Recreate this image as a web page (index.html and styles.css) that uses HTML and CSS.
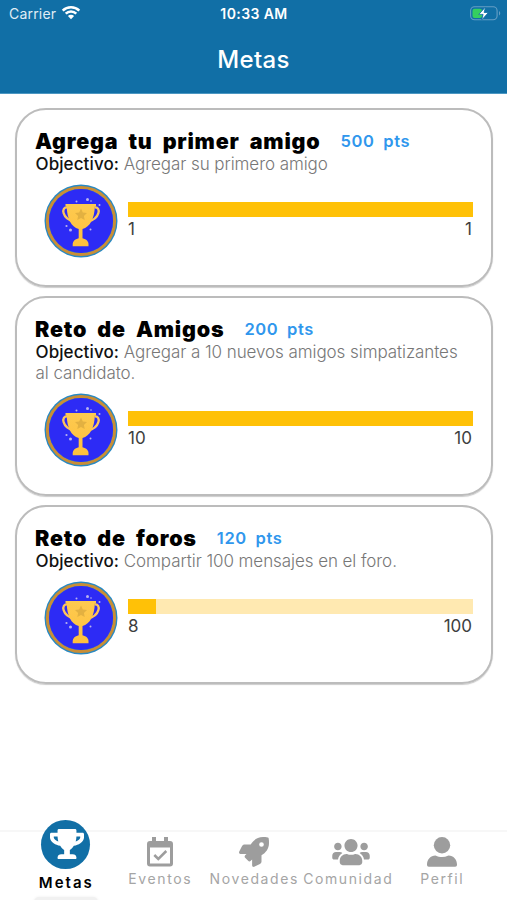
FILE: index.html
```html
<!DOCTYPE html>
<html lang="es">
<head>
<meta charset="utf-8">
<title>Metas</title>
<link rel="stylesheet" href="styles.css">
</head>
<body>
<svg class="defs" aria-hidden="true">
  <defs>
    <linearGradient id="gold" x1="0" y1="0" x2="0" y2="1"><stop offset="0" stop-color="#fdca50"/><stop offset="1" stop-color="#ffc03c"/></linearGradient>
    <symbol id="badge" viewBox="0 0 74 74">
      <circle cx="37" cy="37" r="36.5" fill="#2789c4"/>
      <circle cx="37" cy="37" r="33.6" fill="none" stroke="#c98e36" stroke-width="3"/>
      <circle cx="37" cy="37" r="32" fill="#2d2bf5"/>
      <path d="M23.5 23.5c-7-1-5.5 11.500 6.500 14M50.500 23.500c7-1 5.500 11.500-6.500 14" fill="none" stroke="#fdc55b" stroke-width="2.300"/>
      <path d="M21.500 20h30.500v2.500h-1.200c-.3 12-4.800 20.500-12.300 22.500v9.300c4 .8 6 3.500 6 6v2H28.700v-2c0-2.500 2-5.200 6-6V45c-7.500-2-11.700-10.500-12-22.500h-1.200z" fill="url(#gold)"/>
      <path d="M37 24.500l1.800 4 4.200.5-3.100 2.900.8 4.200-3.700-2-3.700 2 .8-4.200-3.100-2.900 4.200-.5z" fill="#e3b141"/>
      <g fill="#b9b3ee"><circle cx="43.500" cy="15.500" r="1.500"/><circle cx="47" cy="17" r=".8"/><circle cx="32.500" cy="17.500" r="1"/><circle cx="55.500" cy="21" r="1"/><circle cx="22.500" cy="42" r="1.100"/><circle cx="26.500" cy="46" r="1.500"/><circle cx="46.500" cy="45.500" r="1"/></g>
    </symbol>
  </defs>
</svg>
<div class="screen">
  <header class="header">
    <div class="status">
      <div class="carrier">Carrier
        <svg width="20" height="15" viewBox="0 0 20 15"><path d="M1.700 5.700a11.800 11.800 0 0 1 16.600 0M4.700 8.700a7.500 7.500 0 0 1 10.600 0" fill="none" stroke="#fff" stroke-width="2.500"/><path d="M6.900 11a4.400 4.400 0 0 1 6.200 0L10 14.200z" fill="#fff"/></svg>
      </div>
      <div class="time">10:33 AM</div>
      <svg class="battery" width="31" height="15" viewBox="0 0 31 15"><rect x=".6" y=".8" width="26.500" height="13" rx="4" fill="none" stroke="#669fc5" stroke-width="1.100"/><path d="M29 5v4.500c1.700-.8 1.700-3.700 0-4.500z" fill="#669fc5"/><rect x="2.500" y="2.700" width="9.500" height="9.300" rx="2" fill="#35cf60"/><path d="M15.500 1L8.800 8.400h4.300L11.700 14l6.700-7.500h-4.300z" fill="#fff" stroke="#116fa6" stroke-width=".8"/></svg>
    </div>
    <h1>Metas</h1>
  </header>
  <main class="goals">
    <article class="card">
      <div class="heading"><h2>Agrega tu primer amigo</h2><span class="points">500 pts</span></div>
      <p><b>Objectivo:</b> Agregar su primero amigo</p>
      <div class="progress"><svg class="badge"><use href="#badge"/></svg><div class="meter"><div class="track"><div class="fill" style="width:100%"></div></div><div class="counts"><span>1</span><span>1</span></div></div></div>
    </article>
    <article class="card">
      <div class="heading"><h2>Reto de Amigos</h2><span class="points">200 pts</span></div>
      <p><b>Objectivo:</b> Agregar a 10 nuevos amigos simpatizantes al candidato.</p>
      <div class="progress"><svg class="badge"><use href="#badge"/></svg><div class="meter"><div class="track"><div class="fill" style="width:100%"></div></div><div class="counts"><span>10</span><span>10</span></div></div></div>
    </article>
    <article class="card">
      <div class="heading"><h2>Reto de foros</h2><span class="points">120 pts</span></div>
      <p><b>Objectivo:</b> Compartir 100 mensajes en el foro.</p>
      <div class="progress"><svg class="badge"><use href="#badge"/></svg><div class="meter"><div class="track"><div class="fill" style="width:8%"></div></div><div class="counts"><span>8</span><span>100</span></div></div></div>
    </article>
  </main>
  <nav class="tabs">
    <a class="tab active"><span class="bubble"><svg width="34" height="30" viewBox="0 0 576 512" preserveAspectRatio="none"><path d="M552 64H448V24c0-13.300-10.700-24-24-24H152c-13.300 0-24 10.700-24 24v40H24C10.700 64 0 74.700 0 88v56c0 35.700 22.500 72.400 61.900 100.700 31.500 22.700 69.800 37.100 110 41.700C203.300 338.500 240 360 240 360v72h-48c-35.300 0-64 20.700-64 56v12c0 6.600 5.400 12 12 12h296c6.600 0 12-5.400 12-12v-12c0-35.300-28.700-56-64-56h-48v-72s36.700-21.500 68.100-73.600c40.300-4.600 78.600-19 110-41.700 39.300-28.300 61.900-65 61.900-100.700V88c0-13.300-10.700-24-24-24zM99.300 192.800C74.900 175.200 64 155.600 64 144v-16h64.200c1 32.600 5.800 61.200 12.800 86.200-15.100-5.200-29.200-12.400-41.700-21.400zM512 144c0 16.100-17.700 36.100-35.300 48.800-12.500 9-26.700 16.200-41.800 21.400 7-25 11.800-53.600 12.800-86.200H512v16z"/></svg></span><span class="label">Metas</span></a>
    <a class="tab"><svg width="26" height="30" viewBox="0 0 26 30"><path d="M5 0h4v4h8V0h4v4h2a3 3 0 0 1 3 3v19.500a3 3 0 0 1-3 3H3a3 3 0 0 1-3-3V7a3 3 0 0 1 3-3h2zM3 10.500v16h20v-16z" fill-rule="evenodd"/><path d="M7.300 18l4 4 8-8" fill="none" stroke="#9d9d9d" stroke-width="2.500"/></svg><span class="label">Eventos</span></a>
    <a class="tab"><svg width="30" height="30" viewBox="0 0 512 512"><path d="M505 19c-1-5-7-11-12-12C461 0 436 0 410 0 307 0 245 55 199 128H95c-16 0-36 12-43 26L2.500 253A28 28 0 0 0 0 264a24 24 0 0 0 24 24h104l-23 22c-11 12-13 33 0 46l51 51c11 11 32 13 45 0l23-23v104a24 24 0 0 0 24 24c4 0 7-1 11-2.500l98-49.500c15-7 27-26 27-43V313c72-46 128-109 128-211 0-26 0-51-7-83zM384 168a40 40 0 1 1 40-40 40 40 0 0 1-40 40z"/></svg><span class="label">Novedades</span></a>
    <a class="tab"><svg class="people" width="38" height="30" viewBox="0 0 640 512"><path d="M96 224c35.300 0 64-28.700 64-64s-28.700-64-64-64-64 28.700-64 64 28.700 64 64 64zm448 0c35.300 0 64-28.700 64-64s-28.700-64-64-64-64 28.700-64 64 28.700 64 64 64zm32 32h-64c-17.600 0-33.500 7.100-45.100 18.600 40.300 22.100 68.900 62 75.100 109.400h66c17.700 0 32-14.300 32-32v-32c0-35.300-28.700-64-64-64zm-256 0c61.900 0 112-50.100 112-112S381.900 32 320 32 208 82.100 208 144s50.100 112 112 112zm76.800 32h-8.300c-20.800 10-43.900 16-68.500 16s-47.600-6-68.500-16h-8.300C179.600 288 128 339.600 128 403.200V432c0 26.500 21.500 48 48 48h288c26.500 0 48-21.500 48-48v-28.800c0-63.600-51.600-115.200-115.200-115.200zm-223.700-13.400C161.500 263.100 145.600 256 128 256H64c-35.300 0-64 28.700-64 64v32c0 17.700 14.300 32 32 32h65.900c6.300-47.400 34.900-87.300 75.200-109.400z"/></svg><span class="label">Comunidad</span></a>
    <a class="tab"><svg width="30" height="30" viewBox="0 0 30 30"><circle cx="15" cy="8.200" r="8.200"/><path d="M8.500 18.500c4.500 2 8.500 2 13 0 5 0 8.500 4 8.500 9v.5a1.800 1.800 0 0 1-1.800 1.800H1.800A1.800 1.800 0 0 1 0 28v-.5c0-5 3.500-9 8.500-9z"/></svg><span class="label">Perfil</span></a>
  </nav>
</div>
</body>
</html>
```

FILE: styles.css
```css
* { box-sizing: border-box; }
body { margin: 0; background: #fff; font-family: Inter, "Liberation Sans", sans-serif; }
.defs { position: absolute; width: 0; height: 0; }
.screen { display: flex; flex-direction: column; width: 507px; height: 900px; overflow: hidden; }
.header { height: 94px; background: #116fa6; color: #fff; border-bottom: 1px solid #4c97c2; }
.status { display: grid; grid-template-columns: 1fr auto 1fr; align-items: center; height: 27px; padding: 0 6px 0 9px; font-size: 14px; }
.carrier { display: flex; align-items: center; gap: 5px; color: #e0edf5; letter-spacing: 0.2px; }
.carrier svg { margin-top: -2px; }
.time { margin-left: -2px; font-weight: 600; font-size: 14px; letter-spacing: 0.4px; }
.battery { justify-self: end; }
h1 { margin: 17px 0 0; text-align: center; font-size: 24px; line-height: 32px; font-weight: 500; letter-spacing: 0.3px; }
.goals { flex: 1; display: flex; flex-direction: column; gap: 9px; padding: 14px 14px 0 15px; }
.card { height: 179px; padding: 20px 18px 0; border: 2px solid #bcbcbc; border-radius: 31px; box-shadow: 0 1px 1px #ccc; }
.card:nth-child(2) { height: 200px; }
.heading { display: flex; align-items: center; gap: 20px; height: 22px; }
h2 { margin: 0; font-size: 21.500px; line-height: 22px; font-weight: 900; letter-spacing: 0.8px; word-spacing: 5px; color: #000; white-space: nowrap; }
.points { color: #3097ed; font-size: 16.500px; line-height: 20px; margin-top: -1px; font-weight: 600; letter-spacing: 0.600px; word-spacing: 4px; white-space: nowrap; }
p { margin: 0; padding: 2px 0 0 0.500px; font-size: 17px; line-height: 21px; font-weight: 300; color: #777; letter-spacing: -0.070px; }
p b { font-weight: 500; color: #111; letter-spacing: 0.1px; }
.progress { display: flex; gap: 10px; margin: 9px 0 0 9px; }
.badge { width: 74px; height: 74px; flex: none; }
.meter { flex: 1; min-width: 0; padding-top: 18px; }
.track { height: 15px; background: #ffe9b1; }
.fill { height: 100%; background: #ffc107; }
.counts { display: flex; justify-content: space-between; margin-top: 2px; padding-right: 1px; font-size: 17px; line-height: 21px; color: #3e3e3e; }
.tabs { display: grid; grid-template-columns: repeat(5, 94px); justify-content: center; height: 70px; border-top: 2px solid #f7f7f7; }
.tab { position: relative; display: flex; flex-direction: column; align-items: center; padding-top: 5px; color: #a5a5a5; }
.tab svg { fill: #9d9d9d; flex: none; }
.tab .people { margin-left: 7px; }
.label { margin-top: 3px; font-size: 14px; line-height: 17px; letter-spacing: 1.600px; margin-right: -1.600px; white-space: nowrap; }
.tab.active { margin-top: -12px; padding-top: 0; color: #000; }
.bubble { display: flex; align-items: center; justify-content: center; width: 49px; height: 49px; border-radius: 50%; background: #116fa6; }
.tab .bubble svg { fill: #fff; margin: -1px 0 0 3px; }
.active .label { margin-top: 5px; font-size: 15px; font-weight: 600; letter-spacing: 2px; }
.active::after { content: ""; width: 64px; height: 10px; margin-top: 6px; border-radius: 8px; background: #f1f1f1; box-shadow: 0 0 3px #eee; }
```
